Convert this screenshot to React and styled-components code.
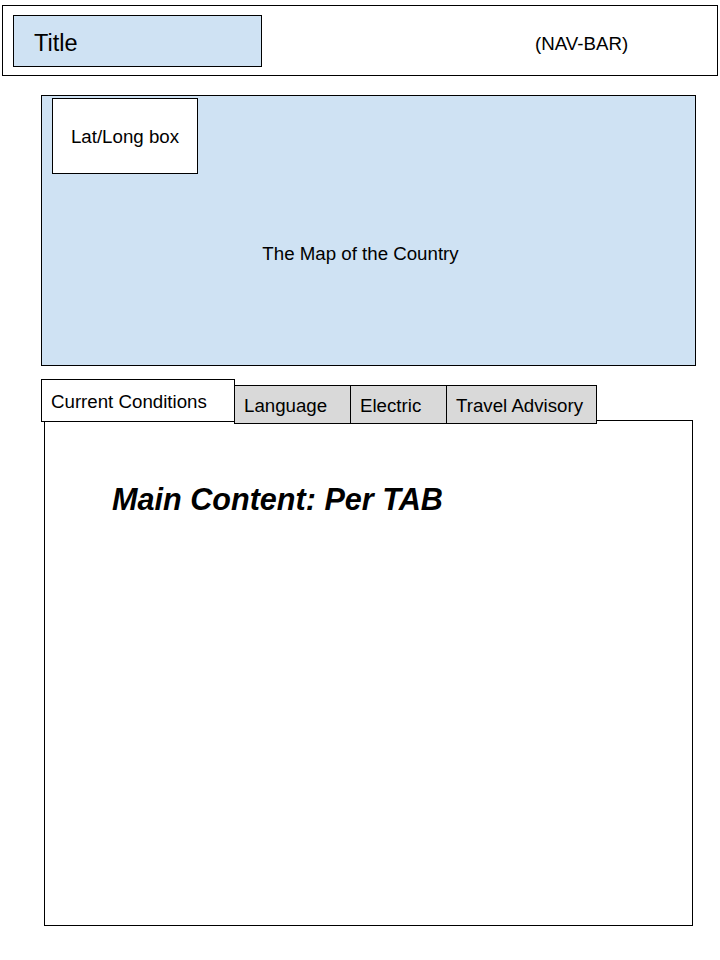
import React from 'react';
import styled, { createGlobalStyle } from 'styled-components';

const GlobalStyle = createGlobalStyle`
  body {
    margin: 0;
    background: #fff;
    font-family: "Liberation Sans", Arial, sans-serif;
    color: #000;
  }
  * { box-sizing: border-box; }
`;

const Page = styled.div`
  width: 720px;
  padding-top: 5px;
`;

const NavBar = styled.header`
  margin: 0 2px;
  height: 71px;
  border: 1px solid #000;
  display: flex;
  align-items: flex-start;
`;

const TitleBox = styled.div`
  margin: 9px 0 0 10px;
  width: 249px;
  height: 52px;
  background: #cfe2f3;
  border: 1px solid #000;
  display: flex;
  align-items: center;
  padding: 5px 0 0 20px;
  font-size: 23.5px;
`;

const NavLabel = styled.div`
  margin: 27px 0 0 273px;
  font-size: 18.7px;
`;

const Map = styled.section`
  position: relative;
  margin: 19px 0 0 41px;
  width: 655px;
  height: 271px;
  background: #cfe2f3;
  border: 1px solid #000;
  display: flex;
  align-items: center;
  justify-content: center;
  padding: 46px 16px 0 0;
  font-size: 18.7px;
`;

const CoordBox = styled.div`
  position: absolute;
  top: 2px;
  left: 10px;
  width: 146px;
  height: 76px;
  background: #fff;
  border: 1px solid #000;
  display: flex;
  align-items: center;
  justify-content: center;
  padding-top: 2px;
  font-size: 18.7px;
`;

const TabRow = styled.nav`
  position: relative;
  z-index: 1;
  margin: 13px 0 -4px 41px;
  display: flex;
  align-items: flex-start;
`;

const Tab = styled.div`
  margin-top: ${p => (p.active ? '0' : '6px')};
  margin-left: ${p => (p.first ? '0' : '-1px')};
  width: ${p => p.w}px;
  height: ${p => (p.active ? '43px' : '39px')};
  background: ${p => (p.active ? '#fff' : '#d9d9d9')};
  border: 1px solid #000;
  display: flex;
  align-items: center;
  padding: 2px 0 0 9px;
  font-size: 18.7px;
  white-space: nowrap;
`;

const Content = styled.main`
  margin-left: 44px;
  width: 649px;
  height: 506px;
  border: 1px solid #000;
  padding: 61px 0 0 67px;
`;

const Heading = styled.h1`
  margin: 0;
  font-size: 30.6px;
  font-weight: bold;
  font-style: italic;
`;

const tabs = [
  { label: 'Current Conditions', w: 194, active: true },
  { label: 'Language', w: 117 },
  { label: 'Electric', w: 97 },
  { label: 'Travel Advisory', w: 151 },
];

export default function App() {
  return (
    <Page>
      <GlobalStyle />
      <NavBar>
        <TitleBox>Title</TitleBox>
        <NavLabel>(NAV-BAR)</NavLabel>
      </NavBar>
      <Map>
        <CoordBox>Lat/Long box</CoordBox>
        The Map of the Country
      </Map>
      <TabRow>
        {tabs.map((t, i) => (
          <Tab key={t.label} w={t.w} active={t.active} first={i === 0}>
            {t.label}
          </Tab>
        ))}
      </TabRow>
      <Content>
        <Heading>Main Content: Per TAB</Heading>
      </Content>
    </Page>
  );
}
